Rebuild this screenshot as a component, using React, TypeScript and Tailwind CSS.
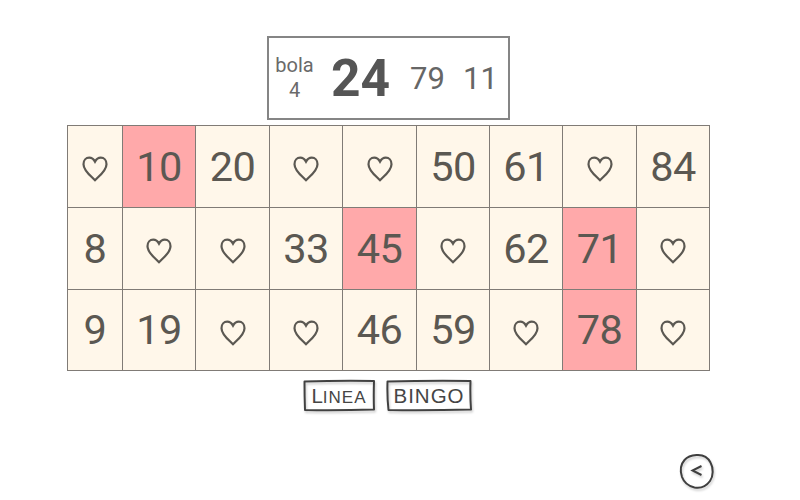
import type { ReactNode } from "react";

const card: (number | null)[][] = [
  [null, 10, 20, null, null, 50, 61, null, 84],
  [8, null, null, 33, 45, null, 62, 71, null],
  [9, 19, null, null, 46, 59, null, 78, null],
];
const marked = [10, 45, 71, 78];

function Heart() {
  return (
    <svg className="mt-[5px]" width="26" height="26" viewBox="0 0 26 26" fill="none" stroke="#5b5852" strokeWidth="2.2">
      <path d="M13 24.300L10.500 21.800C5 16.800 1.500 13 1.500 8.200C1.500 4.300 4 1.700 7.200 1.700C9.800 1.700 11.700 3.200 13 5.700C14.300 3.200 16.200 1.700 18.800 1.700C22 1.700 24.500 4.300 24.500 8.200C24.500 13 21 16.800 15.500 21.800Z" />
    </svg>
  );
}

function SketchButton({ width, path, children }: { width: number; path: string; children: ReactNode }) {
  return (
    <button className="relative flex h-[34px] items-center justify-center font-['Liberation_Sans',Arial,sans-serif] text-[20.5px] leading-none text-[#454545]" style={{ width }}>
      <svg className="absolute inset-0 overflow-visible drop-shadow-[1px_2px_1px_rgba(0,0,0,0.2)]" width={width} height="34" fill="none" stroke="#414141" strokeWidth="2" strokeLinejoin="round">
        <path d={path} />
      </svg>
      <span className="relative">{children}</span>
    </button>
  );
}

export default function App() {
  return (
    <main className="flex h-[500px] w-[800px] flex-col overflow-hidden bg-white pt-[36px] font-[Roboto,sans-serif] text-[#555]">
      <section className="ml-[267px] flex h-[84px] w-[243px] shrink-0 border-2 border-[#858585] leading-none">
        <div className="flex w-[51px] flex-col items-center pt-[15px] text-[20px] leading-[25px] text-[#6a6a6a]">
          <span className="h-[25px]">bola</span>
          <span>4</span>
        </div>
        <strong className="w-[80px] pl-[11px] pt-[15px] text-[51.5px] font-bold">24</strong>
        <span className="w-[54px] pl-[10px] pt-[25px] text-[31px] text-[#666]">79</span>
        <span className="pl-[9px] pt-[25px] text-[31px] text-[#666]">11</span>
      </section>
      <section className="ml-[67px] mt-[5px] grid w-[643px] shrink-0 grid-cols-[55px_73px_74px_73px_74px_73px_73px_74px_74px] grid-rows-[82px_82px_82px] text-[41.500px] leading-none tracking-[-0.5px] text-[#5b5852]">
        {card.map((row, r) =>
          row.map((n, c) => (
            <div
              key={`${r}-${c}`}
              className={`flex items-center justify-center border-l border-t border-[#807b76] ${r === 2 ? "border-b" : ""} ${c === 8 ? "border-r" : ""} ${n !== null && marked.includes(n) ? "bg-[#ffa9aa]" : "bg-[#fff7ea]"}`}
            >
              {n === null ? <Heart /> : <span>{n}</span>}
            </div>
          )),
        )}
      </section>
      <nav className="ml-[303px] mt-[8px] flex shrink-0 gap-[11px]">
        <SketchButton width={72} path="M1.500 2.500Q36 1.500 71 2Q70.500 17 71 30.500Q36 31.500 2 31Q1.500 18 1.500 2.500Z">
          L<span className="text-[17px] tracking-[1px]">INEA</span>
        </SketchButton>
        <SketchButton width={86} path="M1.500 2.500Q43 1.500 84.500 2Q84 17 85 30.500Q43 31.500 2.500 31Q1 18 1.500 2.500Z">
          <span className="tracking-[1px]">BINGO</span>
        </SketchButton>
      </nav>
      <button className="ml-[678px] mt-[40px] shrink-0" aria-label="<">
        <svg className="overflow-visible drop-shadow-[1px_2px_1px_rgba(0,0,0,0.2)]" width="38" height="38" fill="none" stroke="#3f3f3f" strokeWidth="2">
          <path d="M18.500 2C25 1.500 30 4.500 32.500 9.500C35.500 15 35.500 23 32 28C28 33.500 22 35.500 16.500 34.500C10 33 6 29.500 4 24C2 18 2.500 11.500 6.500 7C9.500 3.500 14 2.300 18.500 2Z" />
          <path d="M23.500 13L14.500 17.500L23.500 22" />
        </svg>
      </button>
    </main>
  );
}
